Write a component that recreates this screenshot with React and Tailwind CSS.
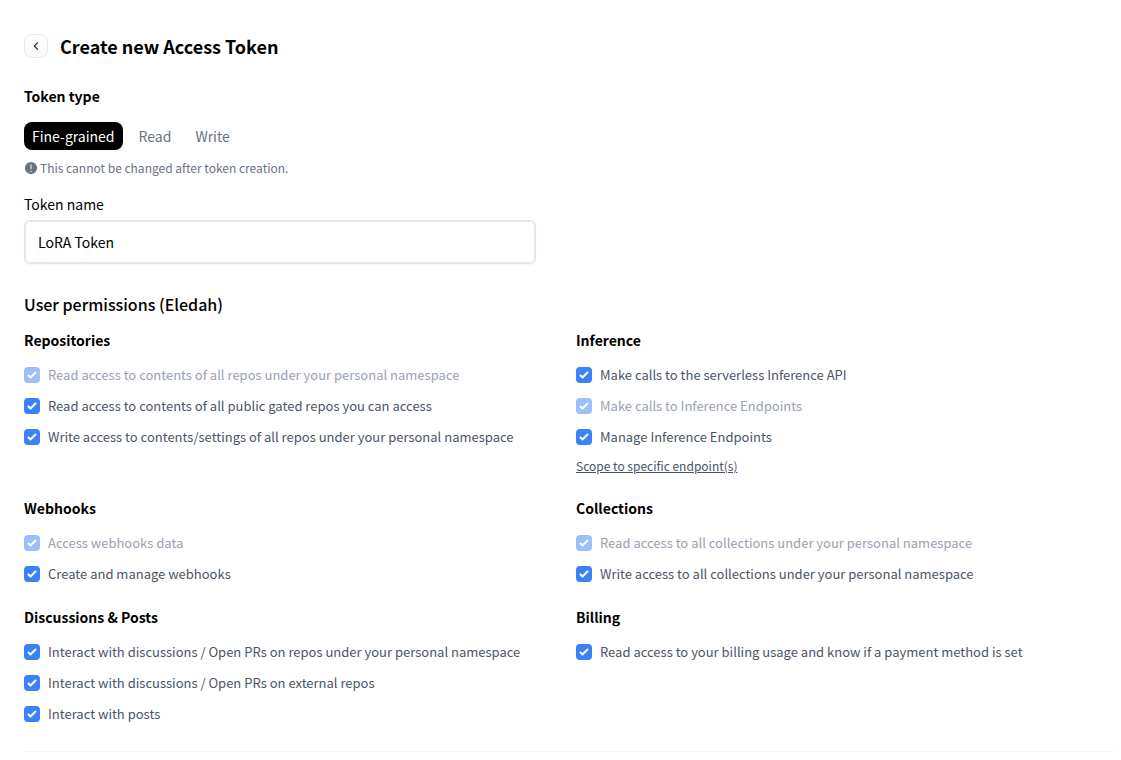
import React from "react";

const groups = [
  {
    title: "Repositories",
    items: [
      { label: "Read access to contents of all repos under your personal namespace", disabled: true },
      { label: "Read access to contents of all public gated repos you can access" },
      { label: "Write access to contents/settings of all repos under your personal namespace" },
    ],
  },
  {
    title: "Inference",
    items: [
      { label: "Make calls to the serverless Inference API" },
      { label: "Make calls to Inference Endpoints", disabled: true },
      { label: "Manage Inference Endpoints" },
    ],
    link: "Scope to specific endpoint(s)",
  },
  {
    title: "Webhooks",
    items: [
      { label: "Access webhooks data", disabled: true },
      { label: "Create and manage webhooks" },
    ],
  },
  {
    title: "Collections",
    items: [
      { label: "Read access to all collections under your personal namespace", disabled: true },
      { label: "Write access to all collections under your personal namespace" },
    ],
  },
  {
    title: "Discussions & Posts",
    items: [
      { label: "Interact with discussions / Open PRs on repos under your personal namespace" },
      { label: "Interact with discussions / Open PRs on external repos" },
      { label: "Interact with posts" },
    ],
  },
  {
    title: "Billing",
    items: [{ label: "Read access to your billing usage and know if a payment method is set" }],
  },
];

function Permission({ label, disabled }) {
  return (
    <label className={"flex items-center gap-2 text-[13px] leading-[23px] " + (disabled ? "text-gray-400" : "text-gray-600")}>
      <span className="grid size-4 shrink-0">
        <input
          type="checkbox"
          defaultChecked
          disabled={disabled}
          className="peer col-start-1 row-start-1 size-4 appearance-none rounded border border-gray-300 bg-white checked:border-transparent checked:bg-[#3b82f6] disabled:opacity-50"
        />
        <svg viewBox="0 0 16 16" fill="#fff" className="pointer-events-none isolate z-10 col-start-1 row-start-1 hidden size-4 peer-checked:block" aria-hidden="true">
          <path d="M12.207 4.793a1 1 0 010 1.414l-5 5a1 1 0 01-1.414 0l-2-2a1 1 0 011.414-1.414L6.5 9.086l4.293-4.293a1 1 0 011.414 0z" />
        </svg>
      </span>
      {label}
    </label>
  );
}

export default function App() {
  const [type, setType] = React.useState("Fine-grained");
  return (
    <main className="bg-white pt-8 pr-[7px] pl-6 font-['Noto_Sans_CJK_SC',sans-serif] text-black">
      <header className="flex items-center gap-3">
        <button type="button" aria-label="Back" className="flex size-6 items-center justify-center rounded-lg border border-gray-200 bg-linear-to-b from-white to-gray-50">
          <svg viewBox="0 0 32 32" className="size-3" fill="currentColor" stroke="currentColor" strokeWidth="1" aria-hidden="true">
            <path d="M10 16L20 6l1.4 1.4l-8.6 8.6l8.6 8.6L20 26z" />
          </svg>
        </button>
        <h1 className="text-lg leading-7 font-bold">Create new Access Token</h1>
      </header>

      <h2 className="mt-6 text-sm leading-6 font-bold">Token type</h2>
      <div className="mt-3.5 flex gap-2">
        {["Fine-grained", "Read", "Write"].map((name) => (
          <button
            key={name}
            type="button"
            onClick={() => setType(name)}
            className={"h-7 rounded-lg px-2 text-sm leading-7 " + (type === name ? "bg-black text-white" : "text-gray-500")}
          >
            {name}
          </button>
        ))}
      </div>
      <p className="mt-2 flex items-center gap-0.5 text-xs leading-5 text-gray-500">
        <svg viewBox="0 0 32 32" className="size-3.5" fill="currentColor" aria-hidden="true">
          <path d="M16 2a14 14 0 1 0 14 14A14 14 0 0 0 16 2Zm-1.1 6h2.2v11h-2.2ZM16 25a1.5 1.5 0 1 1 1.5-1.5A1.5 1.5 0 0 1 16 25Z" />
        </svg>
        This cannot be changed after token creation.
      </p>

      <label htmlFor="token-name" className="mt-3.5 block text-sm leading-6">Token name</label>
      <input
        id="token-name"
        type="text"
        defaultValue="LoRA Token"
        className="mt-1 block h-11 w-full max-w-[512px] rounded-md border-2 border-gray-200 px-3 text-sm shadow-xs"
      />

      <h2 className="mt-[26px] text-base leading-7 font-medium">User permissions (Eledah)</h2>
      <div className="mt-2.5 grid grid-cols-2 gap-x-3.5 gap-y-5 border-b border-gray-100 pb-[26px]">
        {groups.map((group) => (
          <section key={group.title}>
            <h3 className="text-sm leading-6 font-bold">{group.title}</h3>
            <div className="mt-[11px] flex flex-col gap-2">
              {group.items.map((item) => (
                <Permission key={item.label} {...item} />
              ))}
            </div>
            {group.link && (
              <a href="#endpoints" className="mt-2 block w-fit text-xs leading-5 text-gray-600 underline">{group.link}</a>
            )}
          </section>
        ))}
      </div>
    </main>
  );
}
